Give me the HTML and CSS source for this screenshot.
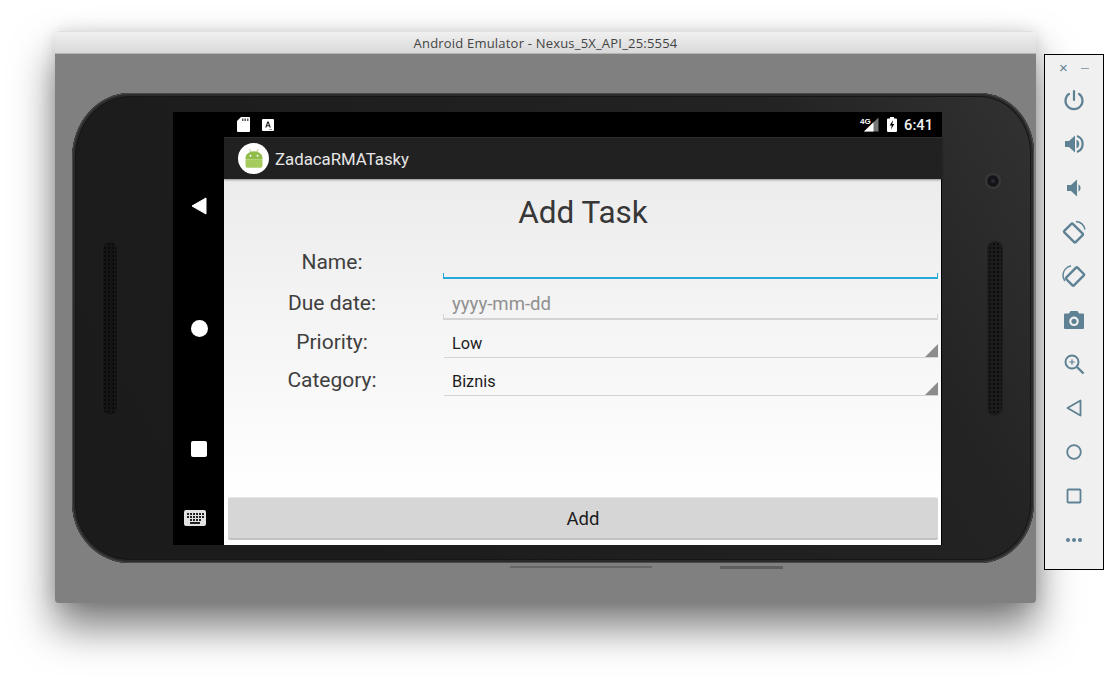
FILE: index.html
```html
<!DOCTYPE html>
<html lang="en">
<head>
<meta charset="utf-8">
<title>Android Emulator</title>
<link rel="stylesheet" href="styles.css">
</head>
<body>
<div class="window">
  <div class="titlebar">Android Emulator - Nexus_5X_API_25:5554</div>
  <div class="stage">
    <div class="phone">
      <div class="speaker speaker-left"></div>
      <div class="screen">
        <nav class="navbar">
          <svg class="nav-back" viewBox="0 0 16 18"><path d="M15 1v16L1 9z" fill="#fff" stroke="#fff" stroke-linejoin="round"/></svg>
          <span class="nav-home"></span>
          <span class="nav-recent"></span>
          <svg class="nav-kbd" viewBox="0 0 22 16"><rect width="22" height="16" rx="2" fill="#e2e2e2"/><g fill="#222"><rect x="3" y="3" width="2" height="2"/><rect x="6" y="3" width="2" height="2"/><rect x="9" y="3" width="2" height="2"/><rect x="12" y="3" width="2" height="2"/><rect x="15" y="3" width="2" height="2"/><rect x="18" y="3" width="2" height="2"/><rect x="3" y="6" width="2" height="2"/><rect x="6" y="6" width="2" height="2"/><rect x="9" y="6" width="2" height="2"/><rect x="12" y="6" width="2" height="2"/><rect x="15" y="6" width="2" height="2"/><rect x="18" y="6" width="2" height="2"/><rect x="6" y="9" width="2" height="2"/><rect x="9" y="9" width="2" height="2"/><rect x="12" y="9" width="2" height="2"/><rect x="15" y="9" width="2" height="2"/><rect x="6" y="12" width="10" height="2"/></g></svg>
        </nav>
        <div class="device">
          <div class="statusbar">
            <svg class="st-sd" viewBox="0 0 13 15"><path d="M4 0h8a1 1 0 0 1 1 1v13a1 1 0 0 1-1 1H1a1 1 0 0 1-1-1V4z" fill="#fff"/><path d="M5 1.500h1.500v2.500H5zM7.500 1.500H9v2.500H7.500zM10 1.500h1.500v2.500H10z" fill="#555"/></svg>
            <svg class="st-a" viewBox="0 0 12 12"><rect width="12" height="12" rx="1" fill="#fff"/><path d="M3.200 8.500 5.300 2.500h1.400l2.100 6H7.500l-.4-1.300H4.900l-.4 1.300zM5.200 6.200h1.600L6 3.900z" fill="#222"/><rect x="7" y="10" width="3" height="1" fill="#999"/></svg>
            <span class="st-spacer"></span>
            <svg class="st-signal" viewBox="0 0 20 16"><path d="M19.500.5v14H5z" fill="#777"/><path d="M14.500 5.300v9.200H5z" fill="#fff"/><text x="1" y="6.500" class="st-4g">4G</text></svg>
            <svg class="st-batt" viewBox="0 0 10 15"><path d="M3 0h4v1.500h2a1 1 0 0 1 1 1V14a1 1 0 0 1-1 1H1a1 1 0 0 1-1-1V2.500a1 1 0 0 1 1-1h2z" fill="#fff"/><path d="M6 3 2.700 8.500h2L4 12.500l3.300-5.500h-2z" fill="#000"/></svg>
            <span class="st-time">6:41</span>
          </div>
          <header class="appbar">
            <span class="app-logo">
              <svg viewBox="0 0 26 24"><g stroke="#9dc25a" stroke-width="1" stroke-linecap="round"><path d="M8 1.500 9.800 4.500M18 1.500 16.200 4.500"/></g><path d="M3 13V11.500C3 7 7.500 3.500 13 3.500s10 3.500 10 8V13z" fill="#8fbc4a"/><path d="M3 13h20v7a3 3 0 0 1-3 3H6a3 3 0 0 1-3-3z" fill="#a4cb5e"/><circle cx="8.800" cy="8.800" r="1.100" fill="#fff"/><circle cx="17.200" cy="8.800" r="1.100" fill="#fff"/></svg>
            </span>
            <span class="app-title">ZadacaRMATasky</span>
          </header>
          <main class="content">
            <h1 class="heading">Add Task</h1>
            <div class="form">
              <div class="row row-name">
                <span class="label">Name:</span>
                <span class="field field-focus"></span>
              </div>
              <div class="row row-date">
                <span class="label">Due date:</span>
                <span class="field field-text">yyyy-mm-dd</span>
              </div>
              <div class="row row-priority">
                <span class="label">Priority:</span>
                <span class="spinner">Low</span>
              </div>
              <div class="row row-category">
                <span class="label">Category:</span>
                <span class="spinner">Biznis</span>
              </div>
            </div>
            <button class="add-btn" type="button">Add</button>
          </main>
        </div>
      </div>
      <div class="cam-column"><span class="camera"></span></div>
      <div class="speaker speaker-right"></div>
      <span class="side-key key-long"></span>
      <span class="side-key key-short"></span>
    </div>
  </div>
</div>
<aside class="toolbar">
  <div class="tb-top"><span class="tb-close">×</span><span class="tb-min"></span></div>
  <svg class="tb-icon" viewBox="0 0 24 24"><path d="M12 3v9" stroke-linecap="round"/><path d="M7 5.800a8.500 8.500 0 1 0 10 0" stroke-linecap="round"/></svg>
  <svg class="tb-icon" viewBox="0 0 24 24"><path class="solid" d="M3 9v6h4l6 5.500V3.500L7 9z"/><path class="solid" d="M14.500 7.500v9a5 5 0 0 0 0-9z"/><path d="M15 4a8.500 8.500 0 0 1 0 16"/></svg>
  <svg class="tb-icon" viewBox="0 0 24 24"><path class="solid" d="M5 9v6h4l6 5.500V3.500L9 9z"/><path class="solid" d="M16.500 8.200v7.600a4.500 4.500 0 0 0 0-7.600z"/></svg>
  <svg class="tb-icon" viewBox="0 0 24 24"><rect x="3.500" y="7" width="16" height="12" rx="1" transform="rotate(45 11.500 13)" stroke-width="2.400"/><path d="M14 1.500c4.500.5 8 3.500 9 8" stroke-width="1.500"/></svg>
  <svg class="tb-icon" viewBox="0 0 24 24"><rect x="5" y="7" width="16" height="11" rx="1" transform="rotate(-45 13 12.500)" stroke-width="2.400"/><path d="M9 1.800C4 3 1 7 1 11.500c0 2 .7 3.800 1.800 5.500" stroke-width="1.500"/></svg>
  <svg class="tb-icon" viewBox="0 0 24 24"><path class="solid" fill-rule="evenodd" d="M8.500 3h7L17 5.500h4a1 1 0 0 1 1 1V20a1 1 0 0 1-1 1H3a1 1 0 0 1-1-1V6.500a1 1 0 0 1 1-1h4zM12 8.500a4.800 4.800 0 1 0 0 9.600 4.800 4.800 0 0 0 0-9.600zm0 2.200a2.600 2.600 0 1 1 0 5.200 2.600 2.600 0 0 1 0-5.200z"/></svg>
  <svg class="tb-icon" viewBox="0 0 24 24"><circle cx="10" cy="10" r="6.500" stroke-width="2"/><path d="M15 15l6.500 6.500" stroke-width="2.400"/><path d="M10 7.200v5.600M7.200 10h5.600" stroke-width="1.200"/></svg>
  <svg class="tb-icon" viewBox="0 0 24 24"><path d="M18.500 4.500v15L5.500 12z" stroke-width="1.800" stroke-linejoin="round"/></svg>
  <svg class="tb-icon" viewBox="0 0 24 24"><circle cx="12" cy="12" r="6.800" stroke-width="1.800"/></svg>
  <svg class="tb-icon" viewBox="0 0 24 24"><rect x="5.500" y="5.500" width="13" height="13" rx="1" stroke-width="1.800"/></svg>
  <svg class="tb-icon" viewBox="0 0 24 24"><g class="solid"><circle cx="6" cy="12" r="2"/><circle cx="12" cy="12" r="2"/><circle cx="18" cy="12" r="2"/></g></svg>
</aside>
</body>
</html>
```

FILE: styles.css
```css
* { box-sizing: border-box; }
html, body { margin: 0; height: 100%; }
body {
  position: relative;
  width: 1104px;
  height: 682px;
  overflow: hidden;
  background: #fff;
  font-family: Roboto, "Liberation Sans", sans-serif;
}
.window {
  position: absolute;
  left: 55px;
  top: 31px;
  width: 981px;
  height: 572px;
  border-radius: 5px 5px 3px 3px;
  overflow: hidden;
  display: flex;
  flex-direction: column;
  box-shadow: 0 24px 42px rgba(0, 0, 0, .52), 0 0 16px rgba(0, 0, 0, .12);
}
.titlebar {
  height: 23px;
  flex: none;
  background: linear-gradient(#f0f0f0, #d9d9d9);
  border-top: 1px solid #e0e0e0;
  border-bottom: 1px solid #b5b5b5;
  font: 13px/23px "Open Sans", "Liberation Sans", sans-serif;
  letter-spacing: .2px;
  color: #444;
  text-align: center;
}
.stage {
  flex: 1;
  background: #808080;
  padding: 39px 2px 0 17px;
}
.phone {
  position: relative;
  height: 470px;
  padding: 19px 0 0 101px;
  display: flex;
  border-radius: 58px 55px 55px 58px / 65px 60px 60px 60px;
  background: linear-gradient(60deg, #1b1b1b 0, #1c1c1c 25%, #232323 78%, #323232 100%);
  box-shadow: inset 0 0 0 1px #4a4a4a, inset 0 0 0 3px #2b2b2b, inset 0 0 0 4px #161616;
}
.speaker {
  position: absolute;
  top: 149px;
  width: 14px;
  height: 173px;
  border-radius: 7px;
  box-shadow: 0 0 0 1px #1f1f1f;
}
.speaker-left {
  left: 31px;
  background: radial-gradient(circle, #0a0a0a 35%, #151515 40%) 0 0 / 4px 4px;
}
.speaker-right {
  right: 32px;
  background: radial-gradient(circle, #0c0c0c 35%, #1c1c1c 40%) 0 0 / 4px 4px;
}
.screen {
  width: 769px;
  height: 433px;
  flex: none;
  display: flex;
  background: #000;
}
.navbar {
  width: 51px;
  flex: none;
  display: flex;
  flex-direction: column;
  align-items: center;
  padding: 85px 0 0 0;
}
.nav-back { width: 16px; height: 18px; margin-left: 1px; flex: none; }
.nav-home { width: 17px; height: 17px; margin: 105px 0 0 1px; flex: none; border-radius: 50%; background: #fff; }
.nav-recent { width: 16px; height: 16px; margin: 104px 0 0 1px; flex: none; border-radius: 2px; background: #fff; }
.nav-kbd { width: 22px; height: 16px; margin: 53px 0 0 -7px; flex: none; }
.device { width: 718px; flex: none; display: flex; flex-direction: column; }
.statusbar {
  height: 25px;
  flex: none;
  display: flex;
  align-items: center;
  padding: 0 9px 0 13px;
  background: #000;
  color: #fff;
}
.st-sd { width: 13px; height: 15px; }
.st-a { width: 12px; height: 12px; margin-left: 12px; }
.st-spacer { flex: 1; }
.st-signal { width: 20px; height: 16px; }
.st-4g { font: 700 8px "Liberation Sans", sans-serif; fill: #fff; }
.st-batt { width: 10px; height: 15px; margin-left: 8px; }
.st-time { font-size: 14.700px; font-weight: 500; margin-left: 7px; color: #f4f4f4; }
.appbar {
  height: 42px;
  flex: none;
  display: flex;
  align-items: center;
  padding: 0 0 0 14px;
  background: #212121;
  border-top: 1px solid #2e2e2e;
  box-shadow: 0 1px 2px rgba(0, 0, 0, .4);
  position: relative;
}
.app-logo {
  width: 31px;
  height: 31px;
  flex: none;
  border-radius: 50%;
  background: #fff;
  display: flex;
  align-items: center;
  justify-content: center;
}
.app-logo svg { width: 22px; height: 21px; }
.app-title { margin-left: 6px; font-size: 16.800px; color: #e6e6e6; }
.content {
  flex: 1;
  display: flex;
  flex-direction: column;
  padding: 0 3px 5px 4px;
  margin-right: 1px;
  background: linear-gradient(#ececec, #fff 88%);
}
.heading {
  margin: 16px 0 0;
  height: 36px;
  font-size: 31.500px;
  line-height: 36px;
  font-weight: 400;
  color: #373737;
  text-align: center;
}
.form { flex: 1; display: flex; flex-direction: column; padding-top: 14px; }
.row { display: flex; }
.label {
  width: 208px;
  margin-right: 7px;
  flex: none;
  text-align: center;
  font-size: 21px;
  line-height: 24px;
  color: #3f3f3f;
}
.row-name { height: 40px; }
.row-date { height: 39px; }
.row-priority { height: 38px; }
.row-category { height: 39px; }
.row-name .label { margin-top: 5px; }
.row-date .label { margin-top: 6px; }
.row-priority .label { margin-top: 6px; }
.row-category .label { margin-top: 6px; }
.field, .spinner { flex: 1; position: relative; display: block; }
.field { border-bottom: 2px solid #d4d4d4; }
.field::before, .field::after {
  content: "";
  position: absolute;
  bottom: 0;
  width: 1px;
  height: 4px;
  background: #d4d4d4;
}
.field::before { left: 0; }
.field::after { right: 0; }
.field-focus { height: 34px; border-bottom-color: #29a9d9; }
.field-focus::before, .field-focus::after { background: #29a9d9; }
.field-text {
  height: 32px;
  margin-top: 3px;
  padding-left: 9px;
  font-size: 18.600px;
  line-height: 32px;
  color: #8f8f8f;
}
.spinner {
  height: 31px;
  margin: 3px 0 0 1px;
  padding: 1px 0 0 8px;
  font-size: 16.300px;
  line-height: 32px;
  color: #1c1c1c;
  border-bottom: 1.500px solid #d4d4d4;
}
.spinner::after {
  content: "";
  position: absolute;
  right: 0;
  bottom: 0;
  width: 13px;
  height: 13px;
  background: #8c8c8c;
  clip-path: polygon(100% 0, 100% 100%, 0 100%);
}
.add-btn {
  height: 43px;
  flex: none;
  width: 100%;
  padding: 2px 0 0;
  border: 0;
  border-top: 1px solid #e4e4e4;
  border-bottom: 2px solid #c2c2c2;
  border-radius: 2px;
  background: #d6d6d6;
  font: 400 18.500px Roboto, sans-serif;
  color: #1b1b1b;
}
.cam-column { flex: 1; display: flex; justify-content: center; }
.camera {
  width: 16px;
  height: 16px;
  margin: 61px 0 0 10px;
  border-radius: 50%;
  background: radial-gradient(circle, #2b2530 0 1.500px, #141418 2.500px 5px, #383838 6.500px);
}
.side-key { position: absolute; top: 100%; height: 2px; margin-top: 3px; background: #666; }
.key-long { left: 438px; width: 142px; }
.key-short { left: 648px; width: 63px; height: 3px; background: #5e5e5e; }
.toolbar {
  position: absolute;
  left: 1044px;
  top: 54px;
  width: 60px;
  height: 516px;
  background: #f0f0f0;
  border: 1px solid #000;
  display: flex;
  flex-direction: column;
  align-items: center;
  padding-top: 8px;
}
.tb-top { width: 100%; height: 10px; flex: none; display: flex; justify-content: center; align-items: center; gap: 14px; margin-bottom: 15px; }
.tb-close { font: 15px/10px "Liberation Sans", sans-serif; color: #5e8193; width: 8px; text-align: center; }
.tb-min { width: 8px; height: 1px; background: #8aa3b0; }
.tb-icon {
  width: 24px;
  height: 24px;
  flex: none;
  margin-bottom: 20px;
  fill: none;
  stroke: #5e8193;
  stroke-width: 2.200;
  overflow: visible;
}
.solid { fill: #5e8193; stroke: none; }
```
